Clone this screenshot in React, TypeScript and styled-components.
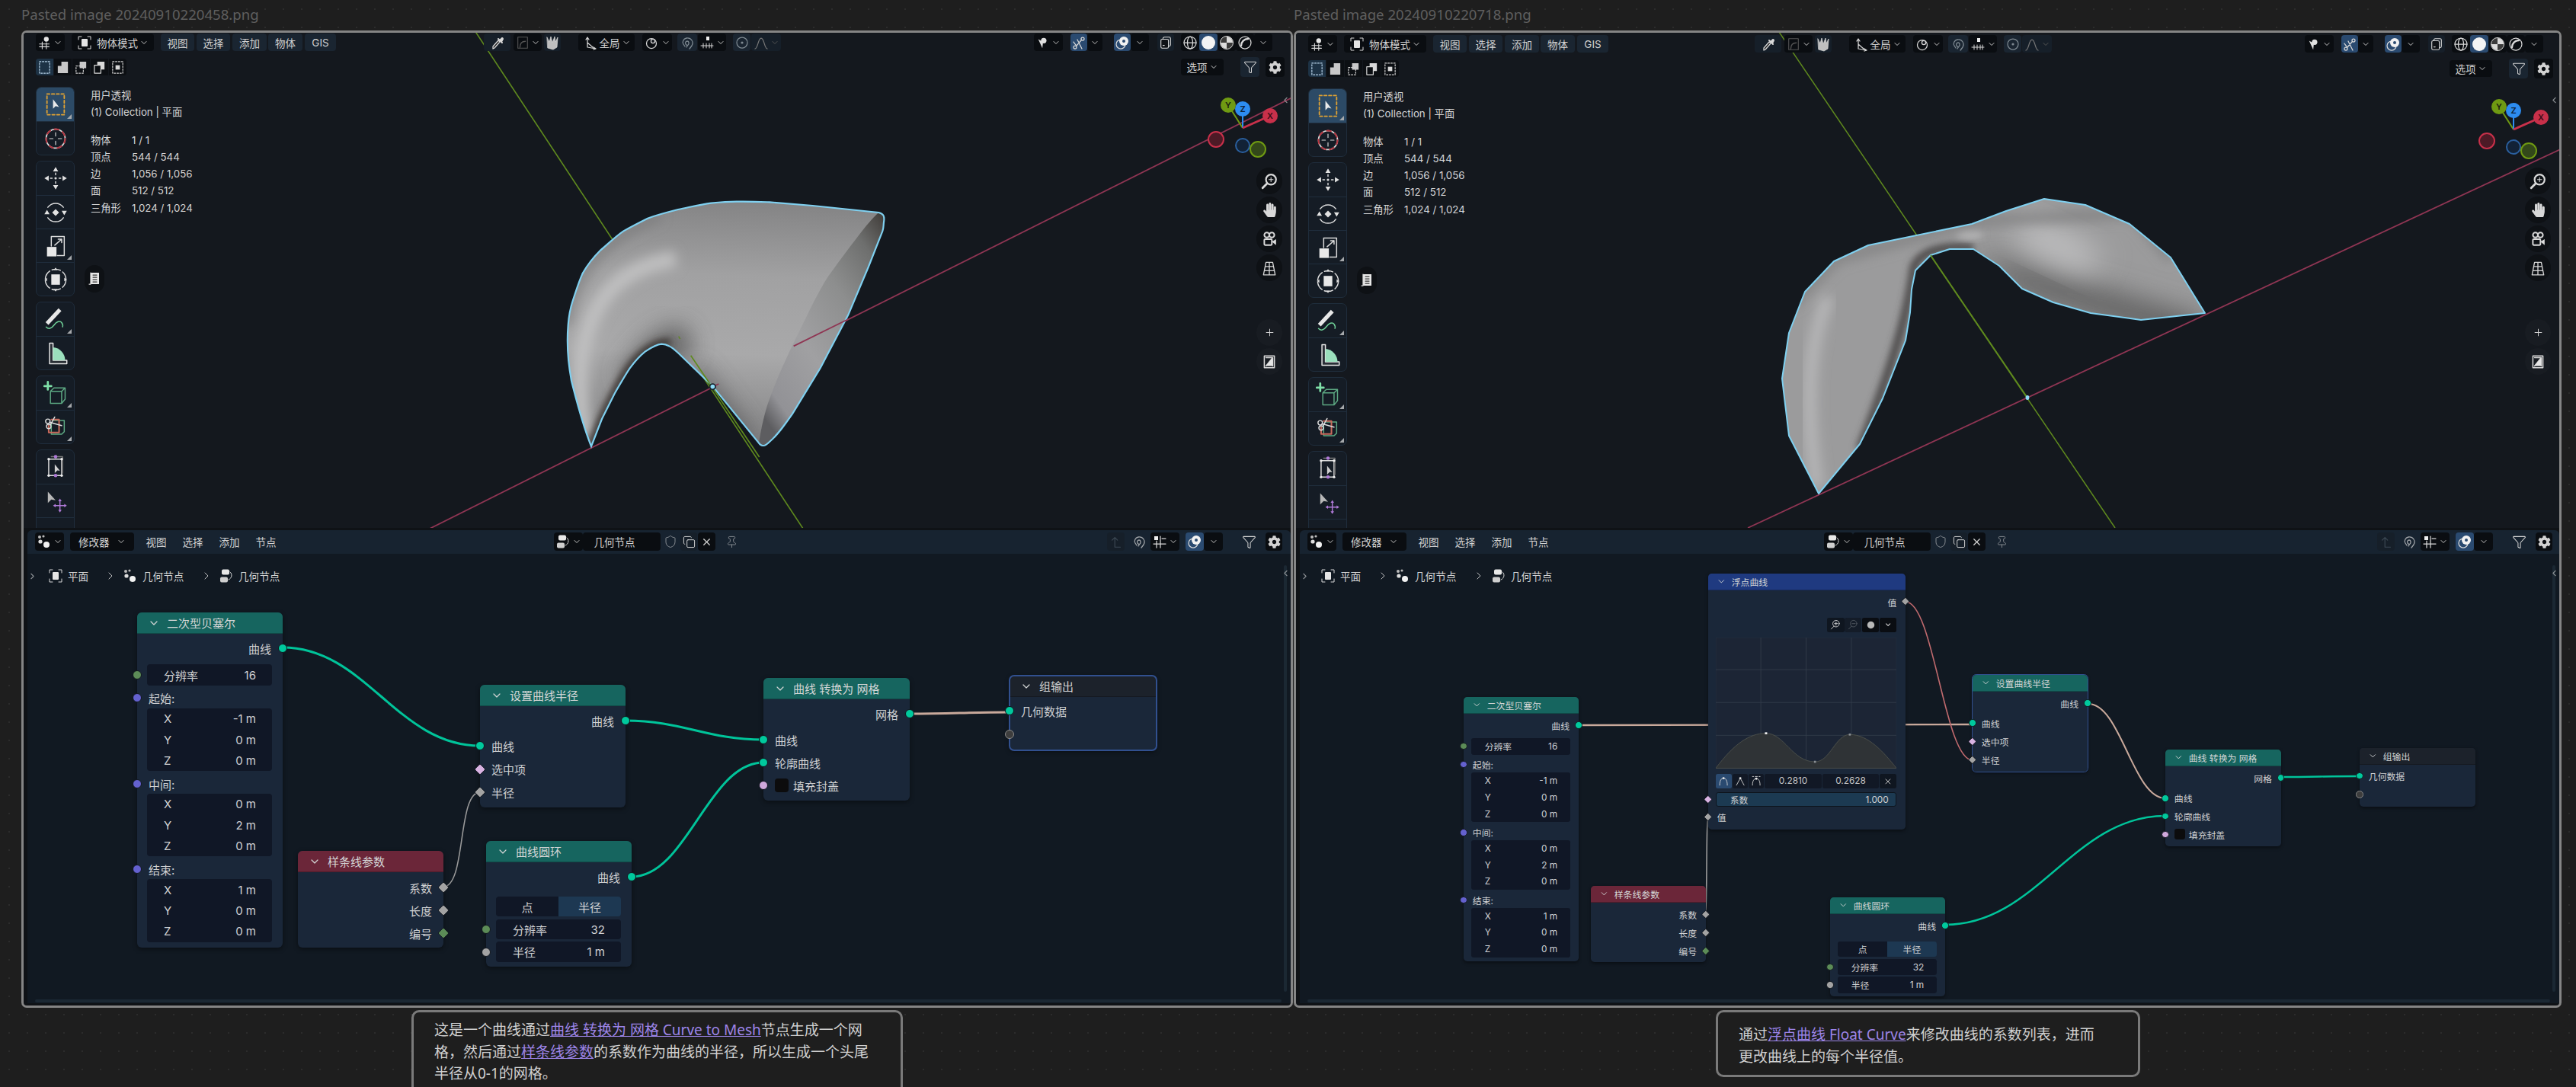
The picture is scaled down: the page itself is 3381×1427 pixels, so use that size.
import React from "react";
import styled, { createGlobalStyle } from "styled-components";
import { ChevronDown, ChevronLeft, ChevronRight, Copy, Filter, Pin, Plus, Shield, X } from "lucide-react";
import { FaCog, FaHandPaper } from "react-icons/fa";

const GlobalStyle = createGlobalStyle`
  html, body { margin: 0; padding: 0; background: #1e1e1e; }
  #root { width: 3381px; height: 1427px; overflow: hidden; }
  * { box-sizing: border-box; }
`;

const uiFont = `Inter, "Noto Sans CJK SC", sans-serif`;
const EDITOR_TOP = 696;

const Page = styled.div`
  width: 3381px;
  height: 1427px;
  overflow: hidden;
  display: flex;
  align-items: flex-start;
  padding-left: 28px;
  gap: 1px;
  background-color: #1e1e1e;
  background-image: radial-gradient(#2c2c2c 1px, transparent 1.2px);
  background-size: 24px 24px;
`;

const Column = styled.div<{ $w: number }>`
  width: ${(p) => p.$w}px;
  display: flex;
  flex-direction: column;
`;

const Caption = styled.div`
  height: 40px;
  display: flex;
  align-items: center;
  padding-bottom: 4px;
  font: 18.6px "Noto Sans", sans-serif;
  color: #5f5f5f;
`;

const Frame = styled.div`
  height: 1283px;
  border: 3px solid #858585;
  border-radius: 7px;
  background: #0f1216;
  overflow: hidden;
  display: flex;
  flex-direction: column;
  font-family: ${uiFont};
`;

const Viewport = styled.div<{ $pt: number }>`
  position: relative;
  height: 650px;
  flex: none;
  background: #14181e;
  overflow: hidden;
  padding: ${(p) => p.$pt}px 8px 0 16px;
`;

const SceneSvg = styled.svg`
  position: absolute;
  left: 0;
  top: 0;
`;

const BarGrid = styled.div<{ $cols: string }>`
  position: relative;
  display: grid;
  grid-template-columns: ${(p) => p.$cols};
  align-items: center;
`;

const Cluster = styled.div`
  display: flex;
  align-items: center;
`;

const Seg = styled.div<{ $w: number; $tone?: string; $ml?: number; $h?: number }>`
  width: ${(p) => p.$w}px;
  height: ${(p) => p.$h ?? 23}px;
  margin-left: ${(p) => p.$ml ?? 0}px;
  flex: none;
  display: flex;
  align-items: center;
  justify-content: center;
  gap: 2px;
  border-radius: 4px;
  font-size: 13.5px;
  color: #d2d2d2;
  white-space: nowrap;
  background: ${(p) =>
    p.$tone === "blue" ? "#2a4a70" : p.$tone === "menu" ? "#1a2531" : p.$tone === "soft" ? "#161f29" : p.$tone === "none" ? "transparent" : "#0a0d11"};
`;

const SecondRow = styled.div`
  position: relative;
  display: flex;
  justify-content: space-between;
  margin-top: 10px;
  height: 22px;
`;

const ViewBody = styled.div`
  position: relative;
  display: flex;
  margin-top: 15px;
`;

const ToolColumn = styled.div`
  width: 51px;
  display: flex;
  flex-direction: column;
  gap: 7px;
`;

const ToolGroup = styled.div`
  border: 1px solid #1f2d3c;
  border-radius: 7px;
  background: #151c25;
  overflow: hidden;
`;

const ToolBtn = styled.div<{ $on?: boolean; $corner?: boolean }>`
  position: relative;
  height: 44px;
  display: flex;
  align-items: center;
  justify-content: center;
  background: ${(p) => (p.$on ? "#2c4a66" : "transparent")};
  & + & { border-top: 1px solid #1f2d3c; }
  ${(p) =>
    p.$corner
      ? `&::after { content: ""; position: absolute; right: 3px; bottom: 3px; border-style: solid; border-width: 0 0 6px 6px; border-color: transparent transparent #a5a8ab transparent; }`
      : ""}
`;

const Stats = styled.div`
  margin-left: 21px;
  color: #d6d6d6;
  font-size: 13.3px;
  line-height: 22.3px;
`;

const StatRow = styled.div`
  display: grid;
  grid-template-columns: 54px auto;
`;

const StatGap = styled.div`
  height: 14px;
`;

const FloatPill = styled.div`
  position: absolute;
  left: 64px;
  top: 234px;
  width: 26px;
  height: 36px;
  border-radius: 13px;
  background: #0e1115;
  display: flex;
  align-items: center;
  justify-content: center;
`;

const NavColumn = styled.div`
  position: absolute;
  right: 11px;
  top: 177px;
  display: flex;
  flex-direction: column;
  align-items: center;
  gap: 3px;
`;

const NavPill = styled.div<{ $mt?: number; $faint?: boolean }>`
  width: 34px;
  height: 35px;
  margin-top: ${(p) => p.$mt ?? 0}px;
  border-radius: 17px;
  background: ${(p) => (p.$faint ? "#181c22" : "#0e1115")};
  display: flex;
  align-items: center;
  justify-content: center;
  color: #d8d8d8;
`;

const EdgeTab = styled.div<{ $top: number }>`
  position: absolute;
  right: 0;
  top: ${(p) => p.$top}px;
  color: #8a8e92;
  display: flex;
`;

const Editor = styled.div`
  position: relative;
  flex: 1;
  margin: 3px 0 3px 5px;
  border-radius: 6px 6px 0 0;
  background: #111922;
  overflow: hidden;
`;

const EditorBar = styled.div`
  position: relative;
  height: 31px;
  padding: 3px 0 0 10px;
  background: #172330;
`;

const Crumbs = styled.div`
  position: relative;
  height: 58px;
  padding-left: 0;
  display: flex;
  align-items: center;
  color: #d2d2d2;
  font-size: 13.6px;
`;

const CrumbStep = styled.span<{ $w: number }>`
  width: ${(p) => p.$w}px;
  display: flex;
  align-items: center;
  gap: 6px;
  white-space: nowrap;
`;

const HScroll = styled.div`
  position: absolute;
  left: 10px;
  right: 12px;
  bottom: 1px;
  height: 4px;
  border-radius: 2px;
  background: #1b2833;
`;

const VScroll = styled.div`
  position: absolute;
  right: 5px;
  top: 46px;
  bottom: 15px;
  width: 4px;
  border-radius: 2px;
  background: #1b2833;
`;

const LinkSvg = styled.svg`
  position: absolute;
  left: 0;
  top: 0;
`;

const NodePos = styled.div<{ $x: number; $y: number }>`
  position: absolute;
  left: ${(p) => p.$x}px;
  top: ${(p) => p.$y}px;
`;

const NodeCard = styled.div<{ $z: number; $w: number; $sel?: boolean }>`
  position: relative;
  zoom: ${(p) => p.$z};
  width: ${(p) => p.$w}px;
  border-radius: 6px;
  background: #1a2739;
  box-shadow: 0 2px 6px rgba(0, 0, 0, 0.45);
  outline: ${(p) => (p.$sel ? "2px solid #31508f" : "none")};
  outline-offset: -1px;
  font-size: 15px;
  color: #d0d1d3;
`;

const tones: Record<string, string> = {
  geo: "#16655f",
  input: "#6b2639",
  group: "#1c222b",
  float: "#1f3a80",
};

const NodeHead = styled.div<{ $tone: string }>`
  height: 28px;
  padding-left: 14px;
  border-radius: 6px 6px 0 0;
  background: ${(p) => tones[p.$tone]};
  border-bottom: 1px solid rgba(0, 0, 0, 0.25);
  display: flex;
  align-items: center;
  gap: 9px;
  color: #d4d6d6;
`;

const NodeBody = styled.div<{ $pb: number }>`
  padding: 4px 0 ${(p) => p.$pb}px;
`;

const Row = styled.div<{ $out?: boolean; $h?: number; $mt?: number }>`
  position: relative;
  height: ${(p) => p.$h ?? 30}px;
  margin-top: ${(p) => p.$mt ?? 0}px;
  padding: 0 15px;
  display: flex;
  align-items: center;
  gap: 6px;
  justify-content: ${(p) => (p.$out ? "flex-end" : "flex-start")};
`;

const SocketDot = styled.span<{ $kind: string; $side: "l" | "r" }>`
  position: absolute;
  top: 50%;
  ${(p) => (p.$side === "l" ? "left: -6px" : "right: -6px")};
  width: 12px;
  height: 12px;
  margin-top: -6px;
  border-radius: ${(p) => (p.$kind.startsWith("d") ? "2px" : "50%")};
  transform: ${(p) => (p.$kind.startsWith("d") ? "rotate(45deg) scale(0.92)" : "none")};
  background: ${(p) =>
    ({
      geo: "#00c99d",
      int: "#5c8c57",
      vec: "#6461cf",
      float: "#a3a3a3",
      bool: "#cfa8dc",
      none: "#3d3d3d",
      dfloat: "#a3a3a3",
      dint: "#5c8c57",
      dbool: "#d8b2e2",
    } as Record<string, string>)[p.$kind]};
  border: 1px solid ${(p) => (p.$kind === "none" ? "#8a8a8a" : "#10161e")};
`;

const FieldWrap = styled.div<{ $h: number; $mt?: number }>`
  position: relative;
  margin-top: ${(p) => p.$mt ?? 0}px;
  height: ${(p) => p.$h}px;
`;

const Field = styled.div<{ $tone?: string }>`
  height: 100%;
  margin: 0 14px 0 13px;
  padding: 0 21px 0 22px;
  border-radius: 4px;
  background: ${(p) => p.$tone ?? "#101726"};
  display: flex;
  align-items: center;
  justify-content: space-between;
`;

const VecBlock = styled.div<{ $mt?: number }>`
  margin: ${(p) => p.$mt ?? 0}px 14px 0 13px;
  padding: 0 21px 0 22px;
  border-radius: 4px;
  background: #101726;
`;

const VecLine = styled.div`
  height: 27.4px;
  display: flex;
  align-items: center;
  justify-content: space-between;
`;

const Tabs = styled.div`
  margin: 11px 14px 0 13px;
  height: 26px;
  display: grid;
  grid-template-columns: 1fr 1fr;
  border-radius: 4px;
  overflow: hidden;
`;

const Tab = styled.div<{ $on?: boolean }>`
  background: ${(p) => (p.$on ? "#1d3852" : "#101726")};
  display: flex;
  align-items: center;
  justify-content: center;
`;

const Tick = styled.span`
  width: 18px;
  height: 18px;
  border-radius: 4px;
  background: #0c0c0d;
  flex: none;
`;

const CurveTools = styled.div`
  margin: 12px 15px 0 0;
  height: 23px;
  display: flex;
  justify-content: flex-end;
  gap: 1px;
`;

const CurveTool = styled.div<{ $tone?: string }>`
  width: 28px;
  height: 23px;
  border-radius: 3px;
  background: ${(p) => p.$tone ?? "#0f1620"};
  display: flex;
  align-items: center;
  justify-content: center;
  color: #d6d6d6;
`;

const CurveGraph = styled.svg`
  display: block;
  margin: 10px 0 0 13px;
`;

const HandleRow = styled.div`
  margin: 9px 15px 0 13px;
  height: 24px;
  display: grid;
  grid-template-columns: 26px 26px 26px 1fr 1fr 28px;
  gap: 1px;
`;

const HandleBtn = styled.div<{ $tone?: string }>`
  border-radius: 3px;
  background: ${(p) => p.$tone ?? "#111825"};
  display: flex;
  align-items: center;
  justify-content: center;
  color: #c8c8c8;
  font-size: 15px;
`;

const FactorBar = styled.div`
  margin: 0 15px 0 13px;
  height: 100%;
  padding: 0 12px 0 22px;
  border: 1px solid #0d141c;
  border-radius: 4px;
  background: #1c3a52;
  display: flex;
  align-items: center;
  justify-content: space-between;
`;

const Note = styled.div<{ $ml: number; $w: number; $h: number; $pt: number }>`
  margin: 3px 0 0 ${(p) => p.$ml}px;
  width: ${(p) => p.$w}px;
  height: ${(p) => p.$h}px;
  padding: ${(p) => p.$pt}px 0 0 27px;
  border: 3px solid #7a7a7a;
  border-radius: 10px;
  background: #1e1e1e;
  font: 19px/28.5px "Noto Sans", "Noto Sans CJK SC", sans-serif;
  color: #d0d0d0;
  white-space: nowrap;
`;

const DocLink = styled.a`
  color: #9d85e8;
  text-decoration: underline;
`;

/* icons */
const Ic: React.FC<{ s?: number; box?: number; children: React.ReactNode; c?: string }> = ({ s = 18, box = 20, children, c = "#d9d9d9" }) => (
  <svg width={s} height={s} viewBox={`0 0 ${box} ${box}`} fill="none" stroke={c} strokeWidth={box / 16} strokeLinecap="round" strokeLinejoin="round">
    {children}
  </svg>
);

const Down = ({ s = 12 }: { s?: number }) => <ChevronDown size={s} strokeWidth={2} color="#c8c8c8" />;

const ViewIcon = () => (
  <Ic>
    <circle cx="12" cy="5" r="3.5" fill="#e5e5e5" stroke="none" />
    <path d="M2 12h14M2 16h14M6 9v10M12 10v9" />
  </Ic>
);
const ObjectIcon = () => (
  <Ic s={20}>
    <path d="M2 6V2h4M14 2h4v4M18 14v4h-4M6 18H2v-4" strokeWidth="1" />
    <rect x="6" y="5" width="8" height="10" rx="1" fill="#e5e5e5" stroke="none" />
  </Ic>
);
const NodesIcon = () => (
  <Ic s={20}>
    <circle cx="4" cy="4" r="2" fill="#bbb" stroke="none" />
    <circle cx="9" cy="3" r="1.6" fill="#bbb" stroke="none" />
    <circle cx="5" cy="10" r="2.6" fill="#ddd" stroke="none" />
    <circle cx="13" cy="14" r="4" fill="#f2f2f2" stroke="none" />
  </Ic>
);
const TreeIcon = () => (
  <Ic s={20}>
    <rect x="4" y="1.5" width="10" height="7" rx="2" fill="#e8e8e8" stroke="none" />
    <rect x="2" y="11.5" width="10" height="7" rx="2" fill="#cfcfcf" stroke="none" />
    <path d="M15 5c3 2 3 8-2 10" strokeWidth="1" />
  </Ic>
);
const Pipette = () => (
  <Ic s={20}>
    <path d="M4 18l2-1 7-8-2-2-7 8z" fill="#222" />
    <path d="M11 5l5 5M13 7l3-3a1.5 1.5 0 0 1 1 1l-2 4" fill="#eee" strokeWidth="2" />
  </Ic>
);
const FalloffIcon = () => (
  <Ic s={18} c="#555">
    <rect x="3" y="2" width="14" height="16" />
    <path d="M6 17c0-6 3-9 8-9" strokeWidth="1.5" />
  </Ic>
);
const NoiseIcon = () => (
  <Ic s={20} c="#ddd">
    <path d="M3 3l3 6 2-7 2 8 3-8 1 7 3-6-1 13-5 3-7-2z" fill="#bfbfbf" strokeWidth="0.7" />
  </Ic>
);
const OrientIcon = () => (
  <Ic s={20}>
    <path d="M6 3v13l11 2M6 3l-2 3M6 3l2 3M17 18l-3-2M14 19l3-1M6 10l7 6" />
  </Ic>
);
const PivotIcon = () => (
  <Ic s={20}>
    <circle cx="9" cy="11" r="6.5" />
    <circle cx="11" cy="8" r="2.6" fill="#14181e" />
  </Ic>
);
const MagnetIcon = ({ c = "#7f8a92" }: { c?: string }) => (
  <Ic s={20} c={c}>
    <path d="M13 18l3-4c3-5-1-11-7-10-4 1-6 5-4 8l2 3M10 14l-2-2c-1-2 0-4 2-4s3 3 1 5l-2 3" strokeWidth="1.3" />
  </Ic>
);
const SnapBaseIcon = () => (
  <Ic s={20}>
    <rect x="9" y="2" width="4" height="5" fill="#eee" stroke="none" />
    <path d="M2 14h16M5 11v6M9 11v6M13 11v6M16 11v6" strokeWidth="1" />
  </Ic>
);
const SnapGridIcon = () => (
  <Ic s={20}>
    <rect x="3" y="3" width="5" height="5" fill="#eee" stroke="none" />
    <path d="M2 13h16M11 3v15M6 9v9M13 6h5" />
  </Ic>
);
const PropIcon = ({ c = "#7f8a92" }: { c?: string }) => (
  <Ic s={20} c={c}>
    <circle cx="10" cy="10" r="7" />
    <circle cx="10" cy="10" r="1.6" fill={c} stroke="none" />
  </Ic>
);
const CurveFall = () => (
  <Ic s={20} c="#777">
    <path d="M2 18c4-1 4-14 8-14s4 13 8 14" />
  </Ic>
);
const VisIcon = () => (
  <Ic s={18}>
    <circle cx="11" cy="7" r="4" fill="#e0e0e0" stroke="none" />
    <path d="M3 5l6 13 1-9z" fill="#e0e0e0" stroke="none" />
  </Ic>
);
const GizmoIcon = () => (
  <Ic s={20}>
    <circle cx="5" cy="16" r="2" />
    <circle cx="15" cy="5" r="2" />
    <path d="M6.5 14.5L13 7M3 9l3 4M8 6l6 12" />
  </Ic>
);
const OverlayIcon = () => (
  <Ic s={20}>
    <circle cx="8" cy="12" r="6" />
    <circle cx="12" cy="8" r="6" fill="#f2f2f2" stroke="none" />
    <circle cx="12" cy="8" r="2" fill="#2a4a70" stroke="none" />
  </Ic>
);
const XrayIcon = () => (
  <Ic s={18}>
    <rect x="6" y="2" width="11" height="13" rx="2" />
    <rect x="3" y="5" width="11" height="13" rx="2" fill="#0f1216" />
    <path d="M6 14h2" />
  </Ic>
);
const WireBall = () => (
  <Ic s={20}>
    <circle cx="10" cy="10" r="8" />
    <ellipse cx="10" cy="10" rx="3.5" ry="8" />
    <path d="M2 10h16" />
  </Ic>
);
const SolidBall = () => (
  <svg width="20" height="20" viewBox="0 0 20 20">
    <circle cx="10" cy="10" r="9" fill="#f4f4f4" />
  </svg>
);
const MatBall = () => (
  <svg width="20" height="20" viewBox="0 0 20 20">
    <circle cx="10" cy="10" r="8.5" fill="#3a3a3a" stroke="#d8d8d8" />
    <path d="M10 2a8 8 0 0 1 8 8h-8zM10 10h-8a8 8 0 0 0 8 8z" fill="#dcdcdc" />
  </svg>
);
const RenderBall = () => (
  <Ic s={20}>
    <circle cx="10" cy="10" r="8" />
    <path d="M5 14c0-5 4-9 9-9" strokeWidth="2.4" />
  </Ic>
);

const selectShapes = [
  <rect key="a" x="3" y="2" width="14" height="16" strokeDasharray="2 2" stroke="#b9d4ea" />,
  <path key="b" d="M8 2h9v16H3V8h5z" fill="#c8c8c8" stroke="none" />,
  <g key="c"><path d="M8 2h9v9H8z" fill="#c8c8c8" stroke="none" /><rect x="3" y="8" width="10" height="10" strokeDasharray="2 2" /></g>,
  <g key="d"><path d="M7 2h10v11H7z" fill="#d8d8d8" stroke="none" /><rect x="3" y="7" width="9" height="11" fill="#0a0d11" stroke="#d8d8d8" /></g>,
  <g key="e"><rect x="3" y="2" width="14" height="16" strokeDasharray="2 2" /><rect x="7" y="7" width="6" height="6" fill="#d8d8d8" stroke="none" /></g>,
];

const SelectModes = styled.div`
  display: flex;
  border-radius: 4px;
  overflow: hidden;
  width: 119px;
  gap: 1px;
`;

const SelectMode = styled.div<{ $on?: boolean }>`
  flex: 1;
  height: 22px;
  background: ${(p) => (p.$on ? "#1d3245" : "#0c0f13")};
  display: flex;
  align-items: center;
  justify-content: center;
`;

const Tool: React.FC<{ children: React.ReactNode }> = ({ children }) => (
  <svg width="34" height="34" viewBox="0 0 30 30" fill="none" stroke="#dcdcdc" strokeWidth="1.3" strokeLinecap="round" strokeLinejoin="round">
    {children}
  </svg>
);

const tools = {
  select: (
    <Tool>
      <rect x="5" y="3" width="20" height="24" stroke="#e0a233" strokeWidth="1.6" strokeDasharray="3 2.5" />
      <path d="M12 9v11l3-3 4 1z" fill="#eaeaea" stroke="none" />
    </Tool>
  ),
  cursor: (
    <Tool>
      <circle cx="15" cy="15" r="11" strokeWidth="1.6" />
      <circle cx="15" cy="15" r="11" stroke="#b7343f" strokeWidth="1.7" strokeDasharray="5 5" />
      <path d="M15 8v4M15 18v4M8 15h4M18 15h4" strokeWidth="1" />
    </Tool>
  ),
  move: (
    <Tool>
      <path d="M15 2l3 5h-6zM15 28l3-5h-6zM2 15l5-3v6zM28 15l-5-3v6z" fill="#e2e2e2" stroke="none" />
      <path d="M15 9v2M15 19v2M9 15h2M19 15h2" />
      <circle cx="15" cy="15" r="1.4" fill="#e2e2e2" stroke="none" />
    </Tool>
  ),
  rotate: (
    <Tool>
      <path d="M6 9a11 11 0 0 1 18 0M24 21a11 11 0 0 1-18 0" />
      <path d="M15 11l4 4-4 4-4-4zM5 12l3 5H2zM25 18l3-5h-6z" fill="#e2e2e2" stroke="none" />
    </Tool>
  ),
  scale: (
    <Tool>
      <path d="M10 15V4h15v22h-8" />
      <rect x="5" y="16" width="11" height="11" fill="#e8e8e8" stroke="none" />
      <path d="M14 14l8-7M22 7h-4M22 7v4" />
    </Tool>
  ),
  transform: (
    <Tool>
      <circle cx="15" cy="15" r="12" strokeDasharray="10 3" />
      <rect x="10" y="9" width="10" height="12" fill="#e8e8e8" stroke="none" />
      <path d="M15 1l2 3h-4zM15 29l2-3h-4zM2 15l3-2v4zM28 15l-3-2v4z" fill="#e2e2e2" stroke="none" />
    </Tool>
  ),
  annotate: (
    <Tool>
      <path d="M5 20L20 4" strokeWidth="4.6" stroke="#e8e8e8" strokeLinecap="butt" />
      <path d="M4 24c3 3 6 2 9-2s7-6 9-3 1 5 1 5" stroke="#6fcf97" />
    </Tool>
  ),
  measure: (
    <Tool>
      <path d="M8 3h4v20h16v4H8z" fill="#2a2f36" stroke="#e8e8e8" />
      <path d="M12 8a15 15 0 0 1 14 15H12z" fill="#9be0bd" stroke="none" />
    </Tool>
  ),
  add: (
    <Tool>
      <path d="M6 2v9M2 7h8" stroke="#7fe0a8" strokeWidth="2.4" />
      <path d="M9 13l4-4h13v13l-4 5H9zM9 13h13v14M22 13l4-4" stroke="#5da983" />
    </Tool>
  ),
  knife: (
    <Tool>
      <path d="M12 7h13v13l-3 3H10V11" stroke="#5da983" />
      <path d="M10 6h9v15H7V13" stroke="#c96a5c" strokeWidth="1.8" />
      <circle cx="6" cy="8" r="2.6" />
      <circle cx="7" cy="14" r="2.6" />
      <path d="M8 9l14 4M9 12l5-9" />
    </Tool>
  ),
  bbox: (
    <Tool>
      <rect x="7" y="6" width="15" height="19" />
      <path d="M10 3h13v19" stroke="#7a7a7a" />
      <path d="M14 12v10l3-3 3 .5z" fill="#d0d0d0" stroke="none" />
      <circle cx="15" cy="3" r="2" fill="#b07ad8" stroke="none" />
      <circle cx="15" cy="25" r="2" fill="#b07ad8" stroke="none" />
      <circle cx="7" cy="6" r="1.5" fill="#eee" stroke="none" />
      <circle cx="22" cy="6" r="1.5" fill="#eee" stroke="none" />
      <circle cx="7" cy="25" r="1.5" fill="#eee" stroke="none" />
      <circle cx="22" cy="25" r="1.5" fill="#eee" stroke="none" />
    </Tool>
  ),
  moveCursor: (
    <Tool>
      <path d="M6 4v13l4-4 5 1z" fill="#b8b8b8" stroke="none" />
      <path d="M20 14v12M14 20h12" stroke="#b07ad8" />
      <path d="M20 12l2 3h-4zM20 28l2-3h-4zM12 20l3-2v4zM28 20l-3-2v4z" fill="#b07ad8" stroke="none" />
    </Tool>
  ),
  sphere: (
    <Tool>
      <path d="M3 24a12 12 0 0 1 24 0" />
      <path d="M15 8l4 6h-8z" fill="#eee" stroke="none" />
      <rect x="10" y="17" width="10" height="4" fill="#eee" stroke="none" />
    </Tool>
  ),
};

const NavZoom = () => (
  <Ic s={22}>
    <circle cx="12" cy="8" r="6" strokeWidth="2" />
    <path d="M7 13l-5 5" strokeWidth="2.6" />
    <path d="M12 5.5v5M9.5 8h5" strokeWidth="1" />
  </Ic>
);
const NavCamera = () => (
  <Ic s={22}>
    <circle cx="7" cy="5" r="3" strokeWidth="1.8" />
    <circle cx="13" cy="5" r="3" strokeWidth="1.8" />
    <rect x="4" y="10" width="9" height="7" rx="1" strokeWidth="1.8" />
    <path d="M13 13l5-3v7z" fill="#ddd" stroke="none" />
  </Ic>
);
const NavGrid = () => (
  <Ic s={22}>
    <path d="M6 3h8l3 15H3zM10 3v15M5 8h10M4 13h12" strokeWidth="1.2" />
  </Ic>
);
const NavLock = () => (
  <Ic s={22}>
    <path d="M4 3h12v14H4zM6 15l8-10M6 5l8 0v10" strokeWidth="1.4" />
    <path d="M6 15l8-10v10z" fill="#e6e6e6" stroke="none" />
  </Ic>
);
const BookIcon = () => (
  <Ic s={20}>
    <rect x="5" y="2" width="11" height="15" fill="#e8e8e8" stroke="none" />
    <path d="M8 5h5M8 8h5M8 11h5M8 14h5" stroke="#333" />
    <path d="M5 2v15h-2" />
  </Ic>
);

/* scenes */
const Gizmo: React.FC<{ x: number; y: number }> = ({ x, y }) => (
  <g transform={`translate(${x} ${y})`} fontFamily="Inter, sans-serif" fontSize="11" fontWeight="600" textAnchor="middle">
    <line x2="-19" y2="-30" stroke="#6f9a12" strokeWidth="2" />
    <line y2="-25" stroke="#2d8cf0" strokeWidth="2" />
    <line x2="36" y2="-16" stroke="#c8304a" strokeWidth="3" />
    <circle cx="-35" cy="15" r="10" fill="#4d1a26" stroke="#c8304a" strokeWidth="2" />
    <circle cy="23" r="9" fill="#122236" stroke="#2a5f9e" strokeWidth="2" />
    <circle cx="20" cy="28" r="10" fill="#33481a" stroke="#6f9a12" strokeWidth="2" />
    <circle cx="-19" cy="-30" r="10" fill="#6f9a12" />
    <text x="-19" y="-26" fill="#1a1f10">Y</text>
    <circle cy="-25" r="10" fill="#2d8cf0" />
    <text y="-21" fill="#0e2238">Z</text>
    <circle cx="36" cy="-16" r="10" fill="#c8304a" />
    <text x="36" y="-12" fill="#3a0c16">X</text>
  </g>
);

const LeftScene = () => {
  const outline =
    "M228 1038C205 980 175 880 150 780C135 700 132 620 137 560C140 520 150 480 155 465C170 420 180 385 195 355C215 320 240 290 265 265C295 240 325 210 355 190C390 170 420 155 450 140C490 125 530 115 570 105C620 95 660 85 700 80C750 75 770 74 800 74C850 73 900 75 930 76L1100 90L1360 117C1378 122 1384 130 1380 155C1378 170 1380 175 1375 190L1320 330L1240 520L1130 730L1020 910C985 960 960 995 930 1020C920 1030 912 1036 905 1035C898 1036 893 1032 888 1025L705 800L570 670C545 645 525 635 505 635C485 636 465 648 440 665C415 685 395 710 380 730C360 760 340 795 320 830C300 870 285 900 270 930Z";
  const inner = "M1360 118C1330 140 1270 220 1160 370C1110 450 1080 520 1040 600C1000 680 950 790 920 880C905 930 895 980 888 1025C893 1032 898 1036 905 1035C912 1036 920 1030 930 1020C960 995 985 960 1020 910L1130 730L1240 520L1320 330L1375 190C1380 175 1378 170 1380 155C1384 130 1378 122 1360 118Z";
  return (
    <SceneSvg width="1664" height="650" viewBox="31 43 1664 650">
      <defs>
        <clipPath id="lmesh">
          <path d={outline} />
        </clipPath>
        <linearGradient id="lbase" x1="0.5" y1="0" x2="0.45" y2="1">
          <stop offset="0" stopColor="#848485" />
          <stop offset="0.3" stopColor="#a1a1a2" />
          <stop offset="0.62" stopColor="#a9a9aa" />
          <stop offset="1" stopColor="#818182" />
        </linearGradient>
        <linearGradient id="linner" x1="0.95" y1="0" x2="0.2" y2="1">
          <stop offset="0" stopColor="#45423f" />
          <stop offset="0.14" stopColor="#6e6f6e" />
          <stop offset="0.36" stopColor="#8d8e8e" />
          <stop offset="0.64" stopColor="#a0a0a2" />
          <stop offset="0.9" stopColor="#929296" />
          <stop offset="1" stopColor="#5d5d60" />
        </linearGradient>
        <filter id="lb1" x="-30%" y="-30%" width="160%" height="160%">
          <feGaussianBlur stdDeviation="22" />
        </filter>
        <filter id="lb2" x="-30%" y="-30%" width="160%" height="160%">
          <feGaussianBlur stdDeviation="45" />
        </filter>
        <filter id="lb3" x="-30%" y="-30%" width="160%" height="160%">
          <feGaussianBlur stdDeviation="12" />
        </filter>
      </defs>
      <line x1="623" y1="40" x2="1058" y2="700" stroke="#5f8a1e" strokeWidth="1.6" />
      <line x1="560" y1="696" x2="1700" y2="126" stroke="#8f3553" strokeWidth="1.8" />
      <g transform="translate(700 240) scale(0.33333)">
        <g clipPath="url(#lmesh)">
          <path d={outline} fill="url(#lbase)" />
          <path d="M640 700C720 790 800 900 890 1030L760 1040L620 780Z" fill="#5a5a5b" opacity="0.8" filter="url(#lb2)" />
          <path d="M330 760C400 650 480 570 560 560C620 560 640 640 620 680L400 800Z" fill="#565656" opacity="0.8" filter="url(#lb2)" />
          <path d="M205 1000C170 800 170 600 280 450C340 370 430 320 560 300" stroke="#bfbfc0" strokeWidth="64" fill="none" filter="url(#lb1)" />
          <path d="M228 1038C260 940 320 800 390 710C440 650 500 620 540 630" stroke="#3a3432" strokeWidth="28" fill="none" filter="url(#lb3)" />
          <path d="M130 560C140 400 250 230 500 130" stroke="#7c7c7d" strokeWidth="30" fill="none" filter="url(#lb1)" />
          <path d={inner} fill="url(#linner)" />
        </g>
        <path d={outline} fill="none" stroke="#7fd0f0" strokeWidth="6.5" />
        <line x1="1025" y1="643" x2="1240" y2="537" stroke="#8f3553" strokeWidth="5.5" />
        <line x1="620" y1="680" x2="890" y2="1080" stroke="#5f8a1e" strokeWidth="5" />
        <line x1="572" y1="605" x2="578" y2="615" stroke="#5f8a1e" strokeWidth="4" />
        <line x1="695" y1="808" x2="730" y2="792" stroke="#8f3553" strokeWidth="5" />
        <circle cx="706" cy="803" r="11" fill="#8edbf6" stroke="#17202a" strokeWidth="5" />
      </g>
      <Gizmo x={1631} y={168} />
    </SceneSvg>
  );
};

const RightScene = () => {
  const outline =
    "M2387 648L2348 572L2339 497L2348 437L2369 383L2407 343L2452 322L2588 294L2633 277L2683 261L2737 269L2795 294L2849 338L2894 411L2810 420L2744 411L2695 397L2654 379L2624 349L2590 327L2559 327L2534 335L2514 355L2509 380L2507 410L2501 447L2471 523L2441 583Z";
  return (
    <SceneSvg width="1659" height="650" viewBox="1701 43 1659 650">
      <defs>
        <clipPath id="rmesh">
          <path d={outline} />
        </clipPath>
        <filter id="rb1" x="-40%" y="-40%" width="180%" height="180%">
          <feGaussianBlur stdDeviation="18" />
        </filter>
        <filter id="rb2" x="-40%" y="-40%" width="180%" height="180%">
          <feGaussianBlur stdDeviation="8" />
        </filter>
        <filter id="rb3" x="-40%" y="-40%" width="180%" height="180%">
          <feGaussianBlur stdDeviation="5" />
        </filter>
      </defs>
      <line x1="2335" y1="42" x2="2776" y2="693" stroke="#5f8a1e" strokeWidth="1.5" />
      <line x1="2294" y1="693" x2="3365" y2="194" stroke="#8f3553" strokeWidth="1.8" />
      <g clipPath="url(#rmesh)">
        <path d={outline} fill="#9b9b9c" />
        <path d="M2820 440L2650 385L2590 330L2900 420L2860 470Z" fill="#606061" filter="url(#rb1)" />
        <ellipse cx="2700" cy="322" rx="62" ry="24" fill="#bcbcbd" filter="url(#rb1)" transform="rotate(25 2700 322)" />
        <path d="M2385 640C2373 560 2368 460 2400 390" stroke="#b8b8b9" strokeWidth="16" fill="none" filter="url(#rb2)" />
        <path d="M2441 590C2480 490 2503 420 2512 350C2525 325 2560 322 2590 326" stroke="#4c4a4a" strokeWidth="11" fill="none" filter="url(#rb3)" />
        <ellipse cx="2585" cy="308" rx="18" ry="6" fill="#b5b5b6" filter="url(#rb3)" />
        <path d="M2350 400L2410 340L2590 290L2800 280L2850 340" stroke="#808081" strokeWidth="12" fill="none" filter="url(#rb2)" />
      </g>
      <path d={outline} fill="none" stroke="#7fd0f0" strokeWidth="2" strokeLinejoin="round" />
      <line x1="2534" y1="335" x2="2661" y2="522" stroke="#5f8a1e" strokeWidth="1.5" />
      <ellipse cx="2661" cy="522" rx="2.4" ry="3" fill="#8edbf6" />
      <Gizmo x={3299} y={170} />
    </SceneSvg>
  );
};

/* node pieces */
const Sock = SocketDot;

const NodeBox: React.FC<{
  at: [number, number];
  ox: number;
  z: number;
  w?: number;
  tone: string;
  title: string;
  sel?: boolean;
  pb: number;
  children: React.ReactNode;
}> = ({ at, ox, z, w = 191, tone, title, sel, pb, children }) => (
  <NodePos $x={at[0] - ox} $y={at[1] - EDITOR_TOP}>
    <NodeCard $z={z} $w={w} $sel={sel}>
      <NodeHead $tone={tone}>
        <ChevronDown size={16} strokeWidth={1.8} />
        {title}
      </NodeHead>
      <NodeBody $pb={pb}>{children}</NodeBody>
    </NodeCard>
  </NodePos>
);

const Vec: React.FC<{ vals: string[] }> = ({ vals }) => (
  <>
    {["X", "Y", "Z"].map((a, i) => (
      <VecLine key={a}>
        <span>{a}</span>
        <span>{vals[i]}</span>
      </VecLine>
    ))}
  </>
);

type NodeProps = { at: [number, number]; ox: number; z: number; sel?: boolean };

const BezierNode: React.FC<NodeProps> = (p) => (
  <NodeBox {...p} tone="geo" title="二次型贝塞尔" pb={7}>
    <Row $out>
      曲线
      <Sock $kind="geo" $side="r" />
    </Row>
    <FieldWrap $h={28} $mt={6}>
      <Sock $kind="int" $side="l" />
      <Field>
        <span>分辨率</span>
        <span>16</span>
      </Field>
    </FieldWrap>
    <Row $h={26} $mt={3}>
      <Sock $kind="vec" $side="l" />
      起始:
    </Row>
    <VecBlock $mt={1}>
      <Vec vals={["-1 m", "0 m", "0 m"]} />
    </VecBlock>
    <Row $h={26} $mt={4}>
      <Sock $kind="vec" $side="l" />
      中间:
    </Row>
    <VecBlock>
      <Vec vals={["0 m", "2 m", "0 m"]} />
    </VecBlock>
    <Row $h={26} $mt={4}>
      <Sock $kind="vec" $side="l" />
      结束:
    </Row>
    <VecBlock>
      <Vec vals={["1 m", "0 m", "0 m"]} />
    </VecBlock>
  </NodeBox>
);

const RadiusNode: React.FC<NodeProps> = (p) => (
  <NodeBox {...p} tone="geo" title="设置曲线半径" pb={5}>
    <Row $out>
      曲线
      <Sock $kind="geo" $side="r" />
    </Row>
    <Row $mt={3}>
      <Sock $kind="geo" $side="l" />
      曲线
    </Row>
    <Row $h={31}>
      <Sock $kind="dbool" $side="l" />
      选中项
    </Row>
    <Row>
      <Sock $kind="dfloat" $side="l" />
      半径
    </Row>
  </NodeBox>
);

const SplineNode: React.FC<NodeProps> = (p) => (
  <NodeBox {...p} tone="input" title="样条线参数" pb={4}>
    <Row $out $mt={1}>
      系数
      <Sock $kind="dfloat" $side="r" />
    </Row>
    <Row $out>
      长度
      <Sock $kind="dfloat" $side="r" />
    </Row>
    <Row $out>
      编号
      <Sock $kind="dint" $side="r" />
    </Row>
  </NodeBox>
);

const CircleNode: React.FC<NodeProps> = (p) => (
  <NodeBox {...p} tone="geo" title="曲线圆环" pb={6}>
    <Row $out>
      曲线
      <Sock $kind="geo" $side="r" />
    </Row>
    <Tabs>
      <Tab>点</Tab>
      <Tab $on>半径</Tab>
    </Tabs>
    <FieldWrap $h={26} $mt={4}>
      <Sock $kind="int" $side="l" />
      <Field>
        <span>分辨率</span>
        <span>32</span>
      </Field>
    </FieldWrap>
    <FieldWrap $h={27} $mt={3}>
      <Sock $kind="float" $side="l" />
      <Field>
        <span>半径</span>
        <span>1 m</span>
      </Field>
    </FieldWrap>
  </NodeBox>
);

const MeshNode: React.FC<NodeProps> = (p) => (
  <NodeBox {...p} w={192} tone="geo" title="曲线 转换为 网格" pb={5}>
    <Row $out>
      网格
      <Sock $kind="geo" $side="r" />
    </Row>
    <Row $mt={4}>
      <Sock $kind="geo" $side="l" />
      曲线
    </Row>
    <Row>
      <Sock $kind="geo" $side="l" />
      轮廓曲线
    </Row>
    <Row>
      <Sock $kind="bool" $side="l" />
      <Tick />
      填充封盖
    </Row>
  </NodeBox>
);

const OutputNode: React.FC<NodeProps> = (p) => (
  <NodeBox {...p} w={193} tone="group" title="组输出" pb={6}>
    <Row $mt={-1}>
      <Sock $kind="geo" $side="l" />
      几何数据
    </Row>
    <Row $mt={1}>
      <Sock $kind="none" $side="l" />
    </Row>
  </NodeBox>
);

const FloatCurveNode: React.FC<NodeProps> = (p) => (
  <NodeBox {...p} w={328} tone="float" title="浮点曲线" pb={7}>
    <Row $out>
      值
      <Sock $kind="dfloat" $side="r" />
    </Row>
    <CurveTools>
      <CurveTool>
        <Ic s={18}>
          <circle cx="11" cy="8" r="6" />
          <path d="M7 13l-5 5M11 5v6M8 8h6" />
        </Ic>
      </CurveTool>
      <CurveTool $tone="#141c28">
        <Ic s={18} c="#535a62">
          <circle cx="11" cy="8" r="6" />
          <path d="M7 13l-5 5M8 8h6" />
        </Ic>
      </CurveTool>
      <CurveTool $tone="#0a0d12">
        <svg width="14" height="14" viewBox="0 0 14 14">
          <circle cx="7" cy="7" r="6" fill="#b8b8b8" />
        </svg>
      </CurveTool>
      <CurveTool $tone="#0a0d12">
        <ChevronDown size={13} strokeWidth={2.4} />
      </CurveTool>
    </CurveTools>
    <CurveGraph width="300" height="217" viewBox="0 0 710 513" preserveAspectRatio="none">
      <rect width="710" height="513" fill="#1c2535" stroke="#2b3442" strokeWidth="2" />
      <path d="M177 0V513M355 0V513M533 0V513M0 126H710M0 255H710M0 384H710" stroke="#353e4c" strokeWidth="2.4" />
      <path d="M0 513C70 420 130 376 197 376C270 376 300 488 390 488C450 488 470 381 527 381C600 381 660 450 710 513Z" fill="#2f3336" stroke="#52564f" strokeWidth="2.4" />
      <rect x="193" y="372" width="9" height="8" fill="#f0f0f0" />
      <rect x="386" y="484" width="8" height="8" fill="#8a8f94" />
      <rect x="523" y="377" width="8" height="8" fill="#8a8f94" />
    </CurveGraph>
    <HandleRow>
      <HandleBtn $tone="#2a4a70">
        <Ic s={18}>
          <path d="M3 18c0-9 3-13 7-13s7 4 7 13" />
          <circle cx="10" cy="5" r="2" fill="#eee" stroke="none" />
        </Ic>
      </HandleBtn>
      <HandleBtn>
        <Ic s={18}>
          <path d="M3 18l7-13 7 13" />
          <circle cx="10" cy="5" r="2" fill="#eee" stroke="none" />
        </Ic>
      </HandleBtn>
      <HandleBtn>
        <Ic s={18}>
          <path d="M3 18c0-9 3-12 7-12s7 3 7 12M3 2h2M8 2h4M15 2h2" />
          <circle cx="10" cy="6" r="2" fill="#eee" stroke="none" />
        </Ic>
      </HandleBtn>
      <HandleBtn>0.2810</HandleBtn>
      <HandleBtn>0.2628</HandleBtn>
      <HandleBtn $tone="#0f1620">
        <X size={15} />
      </HandleBtn>
    </HandleRow>
    <FieldWrap $h={25} $mt={6}>
      <Sock $kind="dbool" $side="l" />
      <FactorBar>
        <span>系数</span>
        <span>1.000</span>
      </FactorBar>
    </FieldWrap>
    <Row $h={26} $mt={4}>
      <Sock $kind="dfloat" $side="l" />
      值
    </Row>
  </NodeBox>
);

const linkPath = (a: number[], b: number[], bend?: number) => {
  const d = bend ?? Math.max(Math.abs(b[0] - a[0]) * 0.42, 30);
  return `M${a[0]} ${a[1]}C${a[0] + d} ${a[1]} ${b[0] - d} ${b[1]} ${b[0]} ${b[1]}`;
};

const Wire: React.FC<{ a: number[]; b: number[]; c: string; w: number; bend?: number }> = ({ a, b, c, w, bend }) => (
  <path d={linkPath(a, b, bend)} stroke={c} strokeWidth={w} fill="none" />
);

const TEAL = "#00c49a";
const BEIGE = "#c9a99b";

const LeftGraph = () => (
  <>
    <LinkSvg width="1660" height="640" viewBox={`36 ${EDITOR_TOP} 1660 640`}>
      <Wire a={[371, 850]} b={[630, 979]} c={TEAL} w={3} />
      <Wire a={[821, 946]} b={[1002, 971]} c={TEAL} w={3} />
      <Wire a={[829, 1151]} b={[1002, 1001]} c={TEAL} w={3} />
      <Wire a={[582, 1164]} b={[630, 1040]} c="#9a9a9a" w={1.6} />
      <Wire a={[1194, 937]} b={[1325, 935]} c={BEIGE} w={3} />
    </LinkSvg>
    <BezierNode at={[180, 804]} ox={36} z={1} />
    <RadiusNode at={[630, 899]} ox={36} z={1} />
    <SplineNode at={[391, 1117]} ox={36} z={1} />
    <CircleNode at={[638, 1104]} ox={36} z={1} />
    <MeshNode at={[1002, 890]} ox={36} z={1} />
    <OutputNode at={[1325, 887]} ox={36} z={1} sel />
  </>
);

const RightGraph = () => (
  <>
    <LinkSvg width="1660" height="640" viewBox={`1706 ${EDITOR_TOP} 1660 640`}>
      <Wire a={[2071, 952]} b={[2589, 951]} c={BEIGE} w={2.4} />
      <Wire a={[2501, 790]} b={[2589, 998]} c="#c06a6e" w={1.6} />
      <Wire a={[2238, 1200]} b={[2242, 1073]} c="#9a9a9a" w={1.6} bend={3} />
      <Wire a={[2741, 924]} b={[2842, 1048]} c={BEIGE} w={2} />
      <Wire a={[2553, 1214]} b={[2842, 1071]} c={TEAL} w={2.4} />
      <Wire a={[2993, 1020]} b={[3097, 1019]} c={TEAL} w={2.4} />
    </LinkSvg>
    <FloatCurveNode at={[2242, 753]} ox={1706} z={0.79} />
    <BezierNode at={[1921, 915]} ox={1706} z={0.79} />
    <SplineNode at={[2088, 1163]} ox={1706} z={0.79} />
    <CircleNode at={[2402, 1178]} ox={1706} z={0.79} />
    <RadiusNode at={[2589, 886]} ox={1706} z={0.79} sel />
    <MeshNode at={[2842, 984]} ox={1706} z={0.79} />
    <OutputNode at={[3097, 982]} ox={1706} z={0.79} />
  </>
);

const stats: [string, string][] = [
  ["物体", "1 / 1"],
  ["顶点", "544 / 544"],
  ["边", "1,056 / 1,056"],
  ["面", "512 / 512"],
  ["三角形", "1,024 / 1,024"],
];

const BlenderWindow: React.FC<{
  viewPt: number;
  viewCols: string;
  barCols: string;
  scene: React.ReactNode;
  graph: React.ReactNode;
}> = ({ viewPt, viewCols, barCols, scene, graph }) => (
  <Frame>
    <Viewport $pt={viewPt}>
      {scene}
      <BarGrid $cols={viewCols}>
        <Cluster>
          <Seg $w={38}>
            <ViewIcon />
            <Down />
          </Seg>
          <Seg $w={108} $ml={9}>
            <ObjectIcon />
            <span>&nbsp;物体模式</span>
            <Down />
          </Seg>
          <Seg $w={44} $ml={9} $tone="menu">视图</Seg>
          <Seg $w={44} $ml={3} $tone="menu">选择</Seg>
          <Seg $w={45} $ml={3} $tone="menu">添加</Seg>
          <Seg $w={45} $ml={2} $tone="menu">物体</Seg>
          <Seg $w={41} $ml={3} $tone="menu">GIS</Seg>
        </Cluster>
        <Cluster>
          <Seg $w={35} $tone="soft"><Pipette /></Seg>
          <Seg $w={37} $ml={4}>
            <FalloffIcon />
            <Down />
          </Seg>
          <Seg $w={22} $ml={3} $tone="soft"><NoiseIcon /></Seg>
          <Seg $w={74} $ml={23}>
            <OrientIcon />
            全局
            <Down />
          </Seg>
          <Seg $w={39} $ml={10}>
            <PivotIcon />
            <Down />
          </Seg>
          <Seg $w={26} $ml={7} $tone="menu"><MagnetIcon /></Seg>
          <Seg $w={37} $ml={1}>
            <SnapBaseIcon />
            <Down />
          </Seg>
          <Seg $w={23} $ml={9} $tone="menu"><PropIcon /></Seg>
          <Seg $w={39} $ml={1} $tone="soft">
            <CurveFall />
            <ChevronDown size={12} color="#555" />
          </Seg>
        </Cluster>
        <Cluster>
          <Seg $w={38}>
            <VisIcon />
            <Down />
          </Seg>
          <Seg $w={22} $ml={10} $tone="blue"><GizmoIcon /></Seg>
          <Seg $w={20}><Down /></Seg>
          <Seg $w={22} $ml={15} $tone="blue"><OverlayIcon /></Seg>
          <Seg $w={24}><Down /></Seg>
          <Seg $w={22} $ml={11} $tone="soft"><XrayIcon /></Seg>
          <Seg $w={24} $ml={9}><WireBall /></Seg>
          <Seg $w={24} $tone="blue"><SolidBall /></Seg>
          <Seg $w={24}><MatBall /></Seg>
          <Seg $w={24}><RenderBall /></Seg>
          <Seg $w={24}><Down /></Seg>
        </Cluster>
      </BarGrid>
      <SecondRow>
        <SelectModes>
          {selectShapes.map((shape, i) => (
            <SelectMode key={i} $on={i === 0}>
              <Ic s={19} c="#cfcfcf">{shape}</Ic>
            </SelectMode>
          ))}
        </SelectModes>
        <Cluster>
          <Seg $w={56} $h={22}>
            选项
            <Down />
          </Seg>
          <Seg $w={25} $h={26} $ml={22} $tone="menu">
            <Filter size={18} strokeWidth={1.4} />
          </Seg>
          <Seg $w={25} $h={26} $ml={8}>
            <FaCog size={17} />
          </Seg>
        </Cluster>
      </SecondRow>
      <ViewBody>
        <ToolColumn>
          <ToolGroup>
            <ToolBtn $on $corner>{tools.select}</ToolBtn>
            <ToolBtn>{tools.cursor}</ToolBtn>
          </ToolGroup>
          <ToolGroup>
            <ToolBtn>{tools.move}</ToolBtn>
            <ToolBtn>{tools.rotate}</ToolBtn>
            <ToolBtn $corner>{tools.scale}</ToolBtn>
            <ToolBtn>{tools.transform}</ToolBtn>
          </ToolGroup>
          <ToolGroup>
            <ToolBtn $corner>{tools.annotate}</ToolBtn>
            <ToolBtn>{tools.measure}</ToolBtn>
          </ToolGroup>
          <ToolGroup>
            <ToolBtn $corner>{tools.add}</ToolBtn>
            <ToolBtn $corner>{tools.knife}</ToolBtn>
          </ToolGroup>
          <ToolGroup>
            <ToolBtn>{tools.bbox}</ToolBtn>
            <ToolBtn>{tools.moveCursor}</ToolBtn>
            <ToolBtn>{tools.sphere}</ToolBtn>
          </ToolGroup>
        </ToolColumn>
        <FloatPill><BookIcon /></FloatPill>
        <Stats>
          <div>用户透视</div>
          <div>(1) Collection | 平面</div>
          <StatGap />
          {stats.map(([k, v]) => (
            <StatRow key={k}>
              <span>{k}</span>
              <span>{v}</span>
            </StatRow>
          ))}
        </Stats>
      </ViewBody>
      <NavColumn>
        <NavPill><NavZoom /></NavPill>
        <NavPill><FaHandPaper size={19} /></NavPill>
        <NavPill><NavCamera /></NavPill>
        <NavPill><NavGrid /></NavPill>
        <NavPill $mt={47} $faint><Plus size={15} strokeWidth={1.5} /></NavPill>
        <NavPill $faint><NavLock /></NavPill>
      </NavColumn>
      <EdgeTab $top={82}><ChevronLeft size={13} /></EdgeTab>
    </Viewport>
    <Editor>
      {graph}
      <EditorBar>
        <BarGrid $cols={barCols}>
          <Cluster>
            <Seg $w={38} $h={24}>
              <NodesIcon />
              <Down />
            </Seg>
            <Seg $w={84} $h={24} $ml={8}>
              修改器&nbsp;&nbsp;
              <Down />
            </Seg>
            <Seg $w={48} $h={24} $ml={5} $tone="none">视图</Seg>
            <Seg $w={48} $h={24} $tone="none">选择</Seg>
            <Seg $w={48} $h={24} $tone="none">添加</Seg>
            <Seg $w={48} $h={24} $tone="none">节点</Seg>
          </Cluster>
          <Cluster>
            <Seg $w={38} $h={24}>
              <TreeIcon />
              <Down />
            </Seg>
            <Seg $w={102} $h={24}>几何节点&nbsp;&nbsp;&nbsp;&nbsp;&nbsp;</Seg>
            <Seg $w={24} $h={24} $ml={1} $tone="none"><Shield size={18} strokeWidth={1.3} color="#8a8f94" /></Seg>
            <Seg $w={22} $h={24} $ml={1} $tone="soft"><Copy size={17} strokeWidth={1.4} /></Seg>
            <Seg $w={23} $h={24} $ml={1}><X size={15} /></Seg>
            <Seg $w={24} $h={24} $ml={9} $tone="none"><Pin size={17} strokeWidth={1.3} color="#8a8f94" /></Seg>
          </Cluster>
          <Cluster>
            <Seg $w={23} $h={24} $tone="soft"><Ic s={18} c="#3d4a55"><path d="M8 18V4l-4 4M8 4l4 4M8 18h8" /></Ic></Seg>
            <Seg $w={30} $h={24} $ml={4} $tone="none"><MagnetIcon c="#a0a4a8" /></Seg>
            <Seg $w={38} $h={24} $ml={0}>
              <SnapGridIcon />
              <Down />
            </Seg>
            <Seg $w={24} $h={24} $ml={8} $tone="blue"><OverlayIcon /></Seg>
            <Seg $w={25} $h={24}><Down /></Seg>
            <Seg $w={26} $h={24} $ml={21} $tone="none"><Filter size={19} strokeWidth={1.3} /></Seg>
            <Seg $w={22} $h={24} $ml={9}><FaCog size={17} /></Seg>
          </Cluster>
        </BarGrid>
      </EditorBar>
      <Crumbs>
        <CrumbStep $w={27}><ChevronRight size={13} color="#8c9095" /></CrumbStep>
        <CrumbStep $w={74}><ObjectIcon /> 平面</CrumbStep>
        <CrumbStep $w={24}><ChevronRight size={16} strokeWidth={1.4} /></CrumbStep>
        <CrumbStep $w={102}><NodesIcon /> 几何节点</CrumbStep>
        <CrumbStep $w={24}><ChevronRight size={16} strokeWidth={1.4} /></CrumbStep>
        <CrumbStep $w={120}><TreeIcon /> 几何节点</CrumbStep>
      </Crumbs>
      <VScroll />
      <HScroll />
      <EdgeTab $top={50}><ChevronLeft size={13} /></EdgeTab>
    </Editor>
  </Frame>
);

export default function App() {
  return (
    <Page>
      <GlobalStyle />
      <Column $w={1669}>
        <Caption>Pasted image 20240910220458.png</Caption>
        <BlenderWindow
          viewPt={1}
          viewCols="588px 722px auto"
          barCols="681px 726px auto"
          scene={<LeftScene />}
          graph={<LeftGraph />}
        />
        <Note $ml={512} $w={645} $h={130} $pt={9}>
          这是一个曲线通过<DocLink>曲线 转换为 网格 Curve to Mesh</DocLink>节点生成一个网
          <br />
          格，然后通过<DocLink>样条线参数</DocLink>的系数作为曲线的半径，所以生成一个头尾
          <br />
          半径从0-1的网格。
        </Note>
      </Column>
      <Column $w={1664}>
        <Caption>Pasted image 20240910220718.png</Caption>
        <BlenderWindow
          viewPt={3}
          viewCols="586px 722px auto"
          barCols="678px 726px auto"
          scene={<RightScene />}
          graph={<RightGraph />}
        />
        <Note $ml={554} $w={557} $h={88} $pt={15}>
          通过<DocLink>浮点曲线 Float Curve</DocLink>来修改曲线的系数列表，进而
          <br />
          更改曲线上的每个半径值。
        </Note>
      </Column>
    </Page>
  );
}
